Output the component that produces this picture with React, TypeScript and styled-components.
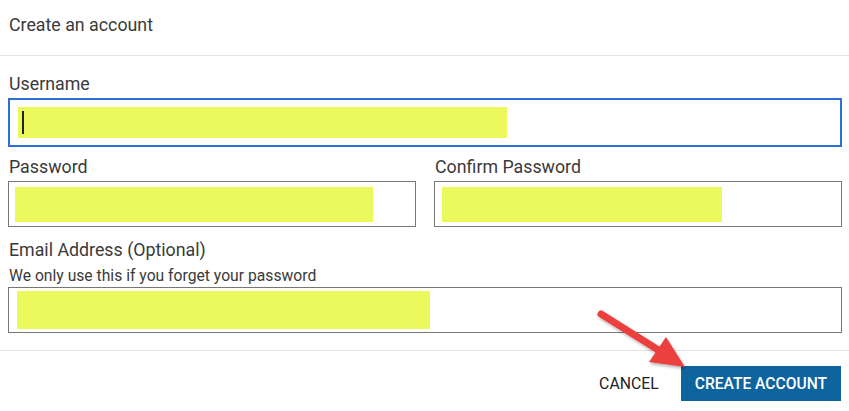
import styled, { createGlobalStyle } from 'styled-components';

const GlobalStyle = createGlobalStyle`
  html, body {
    margin: 0;
    padding: 0;
    background: #fff;
  }
  body {
    font-family: Roboto, 'Liberation Sans', Arial, sans-serif;
    color: #3a3a3a;
  }
`;

const StyledDialog = styled.div`
  position: relative;
  width: 849px;
  height: 411px;
  background: #fff;
  overflow: hidden;
`;

const StyledHeader = styled.div`
  height: 56px;
  display: flex;
  align-items: center;
  padding: 0 9px 6px;
  box-sizing: border-box;
  border-bottom: 1px solid #e2e2e2;
  font-size: 17.8px;
  color: #3a3a3a;
`;

const StyledBody = styled.div`
  padding: 18px 7px 17px 8px;
  display: flex;
  flex-direction: column;
  gap: 10px;
  border-bottom: 1px solid #e2e2e2;
`;

const StyledRow = styled.div`
  display: grid;
  grid-template-columns: 1fr 1fr;
  column-gap: 18px;
`;

const StyledField = styled.div<{ $offset?: number }>`
  display: flex;
  flex-direction: column;
  margin-top: ${(p) => p.$offset ?? 0}px;
`;

const StyledLabel = styled.label<{ $tight?: boolean }>`
  font-size: 17.8px;
  line-height: 20px;
  color: #3a3a3a;
  padding-left: 1px;
  margin-bottom: ${(p) => (p.$tight ? 0 : 4)}px;
`;

const StyledHint = styled.div`
  font-size: 15.7px;
  line-height: 18px;
  color: #3a3a3a;
  padding-left: 1px;
  margin: 7px 0 2px;
`;

const StyledInputBox = styled.div<{ $focused?: boolean; $pad: number }>`
  box-sizing: border-box;
  height: ${(p) => (p.$focused ? '49px' : '46px')};
  border: ${(p) => (p.$focused ? '2px solid #2f6ed6' : '1px solid #777')};
  background: #fff;
  display: flex;
  align-items: center;
  padding-left: ${(p) => p.$pad}px;
`;

const StyledRedact = styled.div<{ $w: number; $h: number }>`
  width: ${(p) => p.$w}px;
  height: ${(p) => p.$h}px;
  background: #ecf95c;
  display: flex;
  align-items: center;
  padding-left: 4px;
  box-sizing: border-box;
`;

const StyledCaret = styled.span`
  width: 2px;
  height: 23px;
  background: #222;
`;

const StyledFooter = styled.div`
  display: flex;
  justify-content: flex-end;
  align-items: center;
  gap: 10px;
  padding: 15px 8px 0 0;
`;

const StyledCancel = styled.button`
  border: none;
  background: none;
  font-family: Roboto, 'Liberation Sans', Arial, sans-serif;
  font-size: 15.8px;
  color: #222;
  padding: 0 12px;
  height: 35px;
`;

const StyledPrimary = styled.button`
  border: none;
  background: #0e649d;
  color: #fff;
  font-family: Roboto, 'Liberation Sans', Arial, sans-serif;
  font-size: 15.6px;
  font-weight: 500;
  height: 35px;
  padding: 0 14px;
`;

const StyledArrow = styled.svg`
  position: absolute;
  left: 0;
  top: 0;
  pointer-events: none;
`;

function App() {
  return (
    <StyledDialog>
      <GlobalStyle />
      <StyledHeader>Create an account</StyledHeader>
      <StyledBody>
        <StyledField>
          <StyledLabel>Username</StyledLabel>
          <StyledInputBox $focused $pad={8}>
            <StyledRedact $w={489} $h={31}>
              <StyledCaret />
            </StyledRedact>
          </StyledInputBox>
        </StyledField>
        <StyledRow>
          <StyledField>
            <StyledLabel>Password</StyledLabel>
            <StyledInputBox $pad={6}>
              <StyledRedact $w={358} $h={35} />
            </StyledInputBox>
          </StyledField>
          <StyledField>
            <StyledLabel>Confirm Password</StyledLabel>
            <StyledInputBox $pad={7}>
              <StyledRedact $w={280} $h={35} />
            </StyledInputBox>
          </StyledField>
        </StyledRow>
        <StyledField $offset={3}>
          <StyledLabel $tight>Email Address (Optional)</StyledLabel>
          <StyledHint>We only use this if you forget your password</StyledHint>
          <StyledInputBox $pad={8}>
            <StyledRedact $w={413} $h={38} />
          </StyledInputBox>
        </StyledField>
      </StyledBody>
      <StyledFooter>
        <StyledCancel>CANCEL</StyledCancel>
        <StyledPrimary>CREATE ACCOUNT</StyledPrimary>
      </StyledFooter>
      <StyledArrow width="849" height="411" viewBox="0 0 849 411">
        <defs>
          <filter id="shadow" x="-20%" y="-20%" width="140%" height="140%">
            <feDropShadow dx="1" dy="2" stdDeviation="1.5" floodColor="#000" floodOpacity="0.3" />
          </filter>
        </defs>
        <g filter="url(#shadow)">
          <line x1="601" y1="314" x2="660" y2="351" stroke="#eb3f3d" strokeWidth="7" strokeLinecap="round" />
          <polygon points="685,367 649,362 666,337" fill="#eb3f3d" />
        </g>
      </StyledArrow>
    </StyledDialog>
  );
}

export default App;
